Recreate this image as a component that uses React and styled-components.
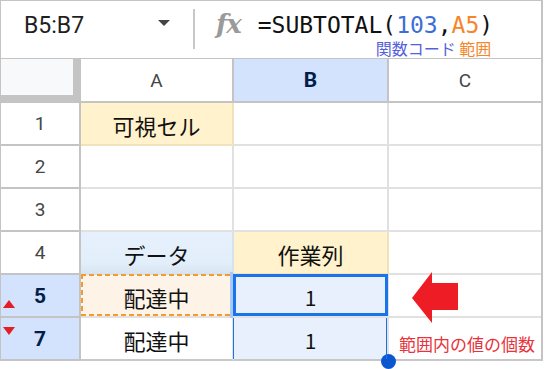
import React from "react";
import styled, { createGlobalStyle } from "styled-components";

const GlobalStyle = createGlobalStyle`
  html, body {
    margin: 0;
    padding: 0;
    background: #fff;
  }
  body {
    min-height: 369px;
  }
`;

const Frame = styled.div`
  width: 543px;
  box-sizing: border-box;
  border: 1px solid #c4c4c4;
  border-right-width: 2px;
  border-bottom: none;
  padding-bottom: 0;
  margin-bottom: 8px;
`;

const FormulaBar = styled.div`
  display: flex;
  align-items: flex-start;
  height: 57px;
  border-bottom: 1px solid #c4c4c4;
`;

const NameBox = styled.div`
  display: flex;
  align-items: flex-start;
  width: 192px;
  box-sizing: border-box;
  padding: 11px 23px 0 23px;
  font-family: Roboto, "Liberation Sans", sans-serif;
  font-size: 23px;
  line-height: 27px;
  color: #1f1f1f;
`;

const Caret = styled.span`
  margin: 8px 0 0 auto;
  width: 0;
  height: 0;
  border-top: 6px solid #444;
  border-left: 6.5px solid transparent;
  border-right: 6.5px solid transparent;
`;

const Divider = styled.div`
  width: 2px;
  height: 40px;
  margin-top: 8px;
  background: #c8c8c8;
`;

const Fx = styled.span`
  margin: 8px 0 0 21px;
  font-family: "DejaVu Serif", serif;
  font-style: italic;
  font-weight: bold;
  font-size: 26px;
  line-height: 30px;
  color: #9a9a9a;
  letter-spacing: -1px;
`;

const FormulaCol = styled.div`
  display: flex;
  flex-direction: column;
  margin-left: 17px;
  padding-top: 11px;
`;

const Formula = styled.div`
  font-family: "DejaVu Sans Mono", "Liberation Mono", monospace;
  font-size: 23px;
  line-height: 26px;
  color: #111;
`;

const Tok = styled.span`
  color: ${(p) => p.$color};
`;

const Note = styled.div`
  margin-top: 2px;
  padding-left: 118px;
  font-family: "Noto Sans CJK JP", sans-serif;
  font-size: 16px;
  line-height: 16px;
  white-space: nowrap;
`;

const Sheet = styled.div`
  display: grid;
  grid-template-columns: 80px 153px 155px 152px;
  grid-template-rows: 44px repeat(6, 43px);
`;

const Corner = styled.div`
  box-sizing: border-box;
  background: #f8f9fa;
  border-right: 8px solid #c4c4c4;
  border-bottom: 8px solid #c4c4c4;
`;

const Head = styled.div`
  position: relative;
  display: flex;
  align-items: center;
  justify-content: center;
  box-sizing: border-box;
  border-right: ${(p) => (p.$last ? "none" : "2px solid #c4c4c4")};
  border-bottom: 2px solid #c4c4c4;
  background: ${(p) => (p.$active ? "#d3e3fd" : "#fff")};
  font-family: Roboto, "Liberation Sans", sans-serif;
  font-size: ${(p) => (p.$active ? "21px" : "19px")};
  font-weight: ${(p) => (p.$active ? 700 : 400)};
  color: ${(p) => (p.$active ? "#041e49" : "#444746")};
`;

const Marker = styled.span`
  position: absolute;
  left: 2px;
  top: ${(p) => (p.$up ? "25px" : "9px")};
  width: 0;
  height: 0;
  border-left: 6px solid transparent;
  border-right: 6px solid transparent;
  ${(p) =>
    p.$up
      ? "border-bottom: 8px solid #e31e24;"
      : "border-top: 8px solid #e31e24;"}
`;

const Cell = styled.div`
  position: relative;
  display: flex;
  align-items: center;
  justify-content: center;
  box-sizing: border-box;
  border-right: ${(p) => (p.$last ? "none" : `2px solid ${p.$line || "#e1e1e1"}`)};
  border-bottom: 2px solid ${(p) => p.$bottom || p.$line || "#e1e1e1"};
  background: ${(p) => p.$bg || "#fff"};
  font-family: "Noto Sans CJK JP", sans-serif;
  font-size: ${(p) => (p.$num ? "21px" : "22px")};
  color: #111;
  padding-top: 3px;
`;

const CopyCell = styled(Cell)`
  &::after {
    content: "";
    position: absolute;
    top: -1px;
    left: 0;
    right: 0;
    bottom: 0;
    background:
      repeating-linear-gradient(90deg, #f29b33 0 5px, transparent 5px 8px) top left / 100% 2px no-repeat,
      repeating-linear-gradient(90deg, #f29b33 0 5px, transparent 5px 8px) bottom left / 100% 2px no-repeat,
      repeating-linear-gradient(180deg, #f29b33 0 5px, transparent 5px 8px) top left / 2px 100% no-repeat,
      repeating-linear-gradient(180deg, #f29b33 0 5px, transparent 5px 8px) top right / 2px 100% no-repeat;
  }
`;

const ActiveCell = styled(Cell)`
  &::before {
    content: "";
    position: absolute;
    left: -4px;
    top: -3px;
    bottom: -3px;
    width: 3px;
    background: #a8c7fa;
  }
  &::after {
    content: "";
    position: absolute;
    top: -1px;
    left: -1px;
    right: -1px;
    bottom: 0;
    border: 3px solid #1a73e8;
  }
`;

const RangeCell = styled(Cell)`
  z-index: 3;
  &::after {
    content: "";
    position: absolute;
    top: 0;
    bottom: 0;
    left: -1px;
    right: 0;
    border-left: 1px solid #1a73e8;
    border-right: 1px solid #1a73e8;
  }
`;

const Handle = styled.span`
  position: absolute;
  left: 147px;
  top: 36px;
  width: 15px;
  height: 15px;
  border-radius: 50%;
  background: #0b57d0;
`;

const NoteCell = styled(Cell)`
  justify-content: flex-start;
  padding: 10px 0 0 10px;
  font-size: 17px;
  color: #e8333a;
  white-space: nowrap;
`;

const Arrow = styled.svg`
  position: absolute;
  left: 20px;
  top: -5px;
  overflow: visible;
  z-index: 2;
`;

export default function App() {
  return (
    <>
      <GlobalStyle />
      <Frame>
        <FormulaBar>
          <NameBox>
            B5:B7
            <Caret />
          </NameBox>
          <Divider />
          <Fx>fx</Fx>
          <FormulaCol>
            <Formula>
              =SUBTOTAL(<Tok $color="#3b6fd6">103</Tok>,<Tok $color="#f5862a">A5</Tok>)
            </Formula>
            <Note>
              <Tok $color="#5561dc">関数コード</Tok> <Tok $color="#f5862a">範囲</Tok>
            </Note>
          </FormulaCol>
        </FormulaBar>

        <Sheet>
          <Corner />
          <Head>A</Head>
          <Head $active>B</Head>
          <Head $last>C</Head>

          <Head>1</Head>
          <Cell $bg="#fff2cc" $line="#efe2bd">可視セル</Cell>
          <Cell />
          <Cell $last />

          <Head>2</Head>
          <Cell />
          <Cell />
          <Cell $last />

          <Head>3</Head>
          <Cell />
          <Cell />
          <Cell $last />

          <Head>4</Head>
          <Cell $bg="linear-gradient(#e6f1fd, #e3eefb 75%, #d9e4f1)" $line="#d7e2ef">データ</Cell>
          <Cell $bg="#fff2cc" $line="#efe2bd">作業列</Cell>
          <Cell $last />

          <Head $active>
            <Marker $up />5
          </Head>
          <CopyCell $bg="#fdf3e6">配達中</CopyCell>
          <ActiveCell $bg="#e8f0fe" $num>1</ActiveCell>
          <Cell $last>
            <Arrow width="52" height="56" viewBox="0 0 52 56">
              <polygon points="3,28 23,2 23,13 49,13 49,40 23,40 23,53" fill="#ee1c24" />
            </Arrow>
          </Cell>

          <Head $active>
            <Marker />7
          </Head>
          <Cell $bottom="#c8c8c8">配達中</Cell>
          <RangeCell $bg="#e8f0fe" $bottom="#c8c8c8" $num>
            1
            <Handle />
          </RangeCell>
          <NoteCell $last $bottom="#c8c8c8">範囲内の値の個数</NoteCell>
        </Sheet>
      </Frame>
    </>
  );
}
